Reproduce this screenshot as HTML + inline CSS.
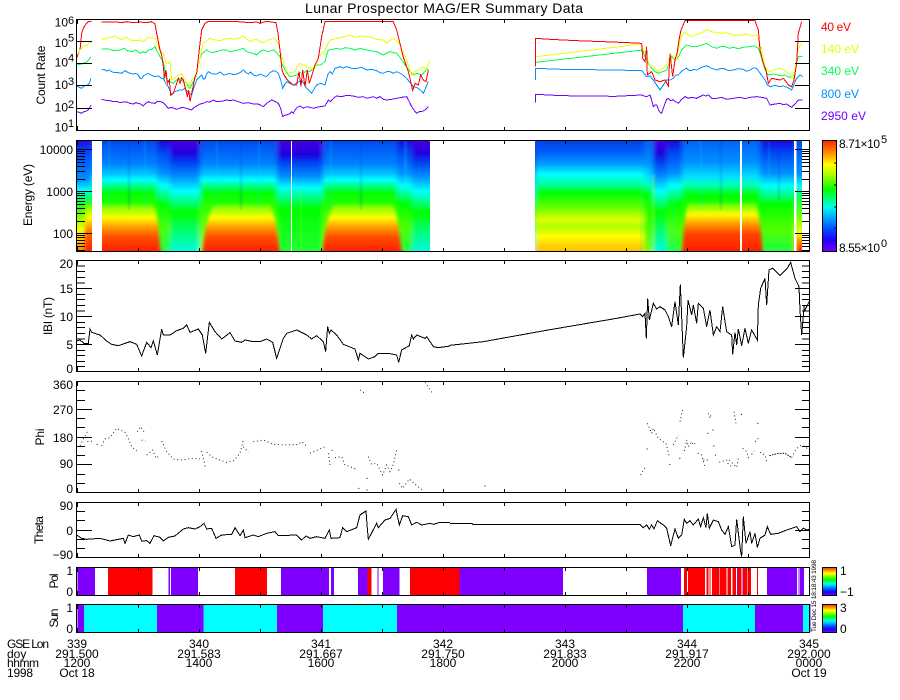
<!DOCTYPE html>
<html><head><meta charset="utf-8"><title>Lunar Prospector MAG/ER Summary Data</title>
<style>
html,body{margin:0;padding:0;background:#fff}
svg{display:block}
text{font-family:"Liberation Sans",sans-serif;font-size:12px;fill:#000}
.c{text-anchor:middle}.e{text-anchor:end}
.cv polyline{fill:none;stroke-width:3;shape-rendering:crispEdges}
.dot polyline{fill:none;stroke:#000;stroke-width:2.6;stroke-dasharray:3 8}
.dot path{fill:none;stroke:#000;stroke-width:3}
.ax{fill:none;stroke:#000;stroke-width:1;shape-rendering:crispEdges}
.bars rect{shape-rendering:crispEdges}
</style></head><body>
<svg width="900" height="700" viewBox="0 0 900 700" xmlns="http://www.w3.org/2000/svg">
<defs>
<linearGradient id="day" gradientUnits="userSpaceOnUse" x1="0" y1="140" x2="0" y2="251">
<stop offset="0" stop-color="#0048f0"/><stop offset=".21" stop-color="#0080ff"/><stop offset=".3" stop-color="#00c0ff"/><stop offset=".36" stop-color="#00ffff"/><stop offset=".41" stop-color="#00ff90"/><stop offset=".48" stop-color="#00ff00"/><stop offset=".6" stop-color="#80ff00"/><stop offset=".7" stop-color="#ffff00"/><stop offset=".78" stop-color="#ffa000"/><stop offset=".87" stop-color="#ff5000"/><stop offset="1" stop-color="#ff2000"/></linearGradient>
<linearGradient id="dayb" gradientUnits="userSpaceOnUse" x1="0" y1="140" x2="0" y2="251">
<stop offset="0" stop-color="#0048f0"/><stop offset=".21" stop-color="#0080ff"/><stop offset=".3" stop-color="#00c0ff"/><stop offset=".36" stop-color="#00ffff"/><stop offset=".41" stop-color="#00ff90"/><stop offset=".48" stop-color="#00ff00"/><stop offset=".7" stop-color="#50ff00"/><stop offset="1" stop-color="#a0ff00"/></linearGradient>
<linearGradient id="wake" gradientUnits="userSpaceOnUse" x1="0" y1="140" x2="0" y2="251">
<stop offset="0" stop-color="#4800e0"/><stop offset=".12" stop-color="#2000e0"/><stop offset=".2" stop-color="#0040f0"/><stop offset=".33" stop-color="#0090ff"/><stop offset=".46" stop-color="#00ffff"/><stop offset=".55" stop-color="#00ff90"/><stop offset=".65" stop-color="#00ff00"/><stop offset=".82" stop-color="#00ff70"/><stop offset="1" stop-color="#00f8e0"/></linearGradient>
<linearGradient id="wake2" gradientUnits="userSpaceOnUse" x1="0" y1="140" x2="0" y2="251">
<stop offset="0" stop-color="#4800e0"/><stop offset=".13" stop-color="#2000e0"/><stop offset=".2" stop-color="#0040f0"/><stop offset=".33" stop-color="#0090ff"/><stop offset=".43" stop-color="#00ffff"/><stop offset=".52" stop-color="#00ff80"/><stop offset=".62" stop-color="#00ff00"/><stop offset="1" stop-color="#20ff30"/></linearGradient>
<linearGradient id="dusk" gradientUnits="userSpaceOnUse" x1="0" y1="140" x2="0" y2="251">
<stop offset="0" stop-color="#2000e0"/><stop offset=".1" stop-color="#0040f0"/><stop offset=".3" stop-color="#0090ff"/><stop offset=".41" stop-color="#00ffff"/><stop offset=".5" stop-color="#00ff80"/><stop offset=".58" stop-color="#00ff00"/><stop offset=".8" stop-color="#50ff00"/><stop offset="1" stop-color="#20ff40"/></linearGradient>
<linearGradient id="gap" gradientUnits="userSpaceOnUse" x1="0" y1="140" x2="0" y2="251">
<stop offset="0" stop-color="#0040e0"/><stop offset=".1" stop-color="#0058f8"/><stop offset=".22" stop-color="#00a0ff"/><stop offset=".31" stop-color="#00ffff"/><stop offset=".4" stop-color="#00ffa0"/><stop offset=".48" stop-color="#00ff00"/><stop offset=".6" stop-color="#60ff00"/><stop offset=".69" stop-color="#c0ff00"/><stop offset=".72" stop-color="#e0ff00"/><stop offset=".78" stop-color="#b0ff00"/><stop offset=".87" stop-color="#ffff00"/><stop offset=".95" stop-color="#ffd000"/><stop offset="1" stop-color="#ffc000"/></linearGradient>
<linearGradient id="day2" gradientUnits="userSpaceOnUse" x1="0" y1="140" x2="0" y2="251">
<stop offset="0" stop-color="#0060f8"/><stop offset=".2" stop-color="#0090ff"/><stop offset=".33" stop-color="#00e0ff"/><stop offset=".4" stop-color="#00ffc0"/><stop offset=".5" stop-color="#00ff00"/><stop offset=".62" stop-color="#a0ff00"/><stop offset=".67" stop-color="#ffff00"/><stop offset=".75" stop-color="#ffa000"/><stop offset=".85" stop-color="#ff4000"/><stop offset="1" stop-color="#ff2000"/></linearGradient>
<linearGradient id="day2b" gradientUnits="userSpaceOnUse" x1="0" y1="140" x2="0" y2="251">
<stop offset="0" stop-color="#0060f8"/><stop offset=".2" stop-color="#0090ff"/><stop offset=".33" stop-color="#00e0ff"/><stop offset=".4" stop-color="#00ffc0"/><stop offset=".5" stop-color="#00ff00"/><stop offset="1" stop-color="#70ff00"/></linearGradient>
<linearGradient id="stripL" gradientUnits="userSpaceOnUse" x1="0" y1="140" x2="0" y2="251">
<stop offset="0" stop-color="#3000e0"/><stop offset=".09" stop-color="#0040ff"/><stop offset=".36" stop-color="#0090ff"/><stop offset=".45" stop-color="#00ffff"/><stop offset=".51" stop-color="#00ff80"/><stop offset=".63" stop-color="#40ff00"/><stop offset=".81" stop-color="#ffff00"/><stop offset="1" stop-color="#ff8000"/></linearGradient>
<linearGradient id="stripR" gradientUnits="userSpaceOnUse" x1="0" y1="140" x2="0" y2="251">
<stop offset="0" stop-color="#0050f0"/><stop offset=".3" stop-color="#0090ff"/><stop offset=".42" stop-color="#00ffff"/><stop offset=".5" stop-color="#00ff60"/><stop offset=".7" stop-color="#80ff00"/><stop offset=".84" stop-color="#ffff00"/><stop offset=".92" stop-color="#ff8000"/><stop offset="1" stop-color="#ff2000"/></linearGradient>
<linearGradient id="cb" x1="0" y1="1" x2="0" y2="0">
<stop offset="0" stop-color="#7000ff"/><stop offset=".1" stop-color="#2000ff"/><stop offset=".2" stop-color="#0050ff"/><stop offset=".33" stop-color="#00c0ff"/><stop offset=".4" stop-color="#00ffe0"/><stop offset=".55" stop-color="#00ff00"/><stop offset=".72" stop-color="#d0ff00"/><stop offset=".78" stop-color="#ffff00"/><stop offset=".88" stop-color="#ff9000"/><stop offset="1" stop-color="#ff2000"/></linearGradient>
<filter id="bl" x="-5%" y="-5%" width="110%" height="110%"><feGaussianBlur stdDeviation="2.4 0"/></filter>
<filter id="bh" x="-10%" y="-10%" width="120%" height="120%"><feGaussianBlur stdDeviation="1.5 1.6"/></filter>
<filter id="bs" x="-10%" y="-10%" width="120%" height="120%"><feGaussianBlur stdDeviation="0.7 0"/></filter>
<clipPath id="p2"><rect x="77" y="140" width="733" height="111"/></clipPath>
<path id="xt" d="M77.5 0v4M138.5 0v3M199.5 0v3M260.5 0v3M321.5 0v3M382.5 0v3M443.5 0v3M504.5 0v3M565.5 0v3M626.5 0v3M687.5 0v3M748.5 0v3M809.5 0v4"/>
</defs>
<rect width="900" height="700" fill="#fff"/>

<text x="444" y="13" class="c" style="font-size:14px" textLength="278">Lunar Prospector MAG/ER Summary Data</text>

<!-- Spectrogram -->
<g clip-path="url(#p2)">
<g filter="url(#bl)">
<rect x="60" y="130" width="32" height="130" fill="url(#stripL)"/>
<rect x="92" y="130" width="65" height="130" fill="url(#dayb)"/>
<rect x="157" y="130" width="13" height="130" fill="url(#dusk)"/>
<rect x="170" y="130" width="30" height="130" fill="url(#wake)"/>
<rect x="200" y="130" width="77" height="130" fill="url(#dayb)"/>
<rect x="277" y="130" width="46" height="130" fill="url(#wake2)"/>
<rect x="323" y="130" width="74" height="130" fill="url(#dayb)"/>
<rect x="397" y="130" width="15" height="130" fill="url(#dusk)"/>
<rect x="412" y="130" width="123" height="130" fill="url(#wake)"/>
<rect x="535" y="130" width="109" height="130" fill="url(#gap)"/>
<rect x="644" y="130" width="9" height="130" fill="url(#day2b)"/>
<rect x="653" y="130" width="14" height="130" fill="url(#wake)"/>
<rect x="667" y="130" width="15" height="130" fill="url(#dusk)"/>
<rect x="682" y="130" width="78" height="130" fill="url(#day2b)"/>
<rect x="760" y="130" width="35" height="130" fill="url(#dusk)"/>
<rect x="795" y="130" width="30" height="130" fill="url(#stripR)"/>
</g>
<g filter="url(#bh)">
<path d="M85 205H152Q156 207 158 225L161 256H85Z" fill="url(#day)"/>
<path d="M202 256Q206 216 214 205H270Q276 216 280 256Z" fill="url(#day)"/>
<path d="M322 256Q326 216 334 205H393Q398 216 402 256Z" fill="url(#day)"/>
<path d="M682 256Q684 216 688 203H756Q760 216 763 256Z" fill="url(#day2)"/>
</g>
<g filter="url(#bs)" fill-opacity=".18">
<rect x="108" y="140" width="2" height="70" fill="#00e0ff"/><rect x="128" y="140" width="2" height="70" fill="#0020d0"/><rect x="144" y="140" width="2" height="70" fill="#00e0ff"/>
<rect x="216" y="140" width="2" height="70" fill="#00e0ff"/><rect x="240" y="140" width="2" height="70" fill="#0020d0"/><rect x="258" y="140" width="2" height="70" fill="#00e0ff"/>
<rect x="330" y="140" width="2" height="70" fill="#00e0ff"/><rect x="360" y="140" width="2" height="70" fill="#0020d0"/><rect x="404" y="140" width="3" height="50" fill="#00ffff"/>
<rect x="700" y="140" width="2" height="70" fill="#00e0ff"/><rect x="720" y="140" width="2" height="70" fill="#0020d0"/><rect x="768" y="140" width="2" height="60" fill="#00e0ff"/><rect x="778" y="140" width="2" height="60" fill="#0020d0"/>
<rect x="652" y="175" width="3" height="76" fill="#ffff00"/><rect x="640" y="175" width="2" height="76" fill="#00ffc0"/><rect x="672" y="195" width="3" height="56" fill="#00ffc0"/>
<rect x="163" y="190" width="2" height="61" fill="#00ffc0"/><rect x="300" y="190" width="2" height="61" fill="#90ff00"/>
</g>
<g class="bars" fill="#fff">
<rect x="92" y="140" width="10" height="111"/>
<rect x="291" y="140" width="1" height="111"/>
<rect x="430" y="140" width="105" height="111"/>
<rect x="740" y="140" width="2" height="111"/>
<rect x="794" y="140" width="2.5" height="111"/>
<rect x="802" y="140" width="8" height="111"/>
</g>
</g>

<!-- Count rates, left -->
<g class="cv" transform="scale(.33333)">
<polyline stroke="#ff0000" points="230,175 235,160 240,150 245,100 250,85 258,72 265,65 275,65"/>
<polyline stroke="#e8ff00" points="230,165 240,150 250,140 262,135 275,125"/>
<polyline stroke="#00ff50" points="230,195 245,192 262,185 273,170"/>
<polyline stroke="#0090ff" points="230,258 238,262 245,265 252,258 262,255 268,250 273,235"/>
<polyline stroke="#7000ff" points="230,335 238,337 245,340 252,335 262,332 268,325 273,315"/>
<polyline stroke="#7000ff" points="305,298 314,300 320,302 330,302 340,305 350,304 360,308 370,306 380,306 390,310 400,312 408,308 415,310 422,312 430,318 437,310 445,305 455,309 465,310 472,304 480,304 490,308 497,316 505,325 515,322 530,328 540,324 550,322 562,326 575,330 583,322 590,318 600,312 610,310 620,305 630,306 640,300 650,305 670,303 680,300 690,302 700,300 715,305 730,310 745,308 760,312 775,312 790,320 800,310 815,300 825,304 835,310 842,325 848,350 855,345 860,345 868,342 875,335 880,340 885,330 892,322 900,318 910,325 920,320 930,322 940,325 950,322 960,320 975,318 985,300 992,305 1000,295 1010,288 1025,290 1040,286 1060,288 1075,292 1090,290 1100,295 1120,290 1130,295 1140,290 1150,298 1160,300 1175,298 1190,295 1205,292 1220,290 1228,305 1235,320 1243,332 1250,340 1258,335 1265,335 1275,330 1285,320"/>
<polyline stroke="#0090ff" points="305,210 312,208 320,213 328,210 335,215 345,218 355,218 365,220 375,212 385,218 400,222 408,220 415,225 420,235 425,235 430,228 435,225 445,220 455,226 465,230 475,228 485,235 490,235 497,250 505,260 515,285 520,278 525,275 533,272 540,270 548,270 555,265 565,278 575,285 582,262 590,240 597,232 605,225 610,238 615,235 620,222 625,215 637,222 650,222 660,216 672,225 690,220 700,224 710,222 720,218 730,210 738,218 745,222 752,216 760,225 770,228 780,222 790,226 800,230 810,218 820,212 828,214 835,220 842,240 848,265 853,255 860,245 870,250 880,255 892,248 905,240 912,252 920,265 928,272 935,280 942,268 950,255 962,250 975,255 983,225 990,215 997,222 1005,205 1020,200 1030,204 1040,200 1055,205 1070,205 1085,202 1100,210 1115,208 1130,212 1140,218 1150,220 1160,215 1170,215 1180,220 1190,215 1205,222 1220,235 1230,248 1240,260 1248,262 1255,265 1263,272 1270,280 1278,262 1285,245"/>
<polyline stroke="#00ff50" points="305,148 318,146 330,148 340,152 350,152 360,150 372,145 382,152 395,155 407,150 420,160 430,155 437,158 445,150 455,148 465,140 472,155 480,170 485,178 490,185 495,215 500,240 510,245 520,250 530,240 540,235 550,245 560,250 570,265 580,245 590,225 600,175 607,160 620,150 635,158 650,155 665,150 680,150 690,156 700,153 715,150 730,145 740,155 750,158 760,160 770,165 780,155 790,150 805,155 820,150 830,158 840,170 845,190 850,200 860,218 870,230 880,228 890,225 900,218 910,220 920,212 930,215 940,205 950,195 962,195 975,185 980,165 985,150 997,148 1010,145 1022,148 1035,143 1050,145 1065,150 1080,145 1100,150 1115,153 1130,155 1140,160 1150,165 1160,160 1170,155 1180,158 1190,160 1202,175 1215,195 1228,212 1240,225 1252,220 1265,225 1275,215 1285,205"/>
<polyline stroke="#e8ff00" points="305,115 312,118 320,115 332,112 345,108 355,115 365,120 375,112 385,115 397,122 410,122 420,120 430,125 437,118 445,112 455,114 465,115 472,130 478,150 485,155 490,160 495,180 500,190 505,190 510,185 513,220 515,240 522,235 530,230 537,225 545,220 550,232 555,240 560,255 565,265 570,255 575,240 582,235 590,225 595,200 600,175 605,150 610,130 620,122 630,115 645,120 660,122 672,118 685,115 700,117 715,115 730,108 740,118 750,125 760,120 770,118 780,125 790,128 805,120 820,115 828,120 835,130 842,158 848,180 854,200 860,215 872,218 885,215 892,200 900,190 908,195 915,195 922,205 930,200 937,208 945,205 950,188 955,170 965,162 975,150 982,135 990,120 1000,118 1010,115 1025,112 1035,110 1050,105 1065,112 1085,108 1100,110 1115,112 1130,118 1150,120 1160,130 1170,122 1180,115 1190,122 1200,135 1210,158 1220,180 1228,205 1235,225 1245,215 1255,210 1263,205 1270,200 1278,210 1284,195 1290,180"/>
<polyline stroke="#ff0000" points="305,66 370,67 380,65 400,68 420,66 440,68 455,65 465,72 470,100 480,150 485,165 490,200 493,235 498,210 502,250 508,240 512,285 520,280 530,250 535,235 540,250 545,233 550,240 555,260 562,290 566,270 570,305 575,280 585,230 590,220 600,130 605,90 615,70 625,64 700,64 750,68 770,66 780,70 800,64 828,68 834,100 842,170 846,210 852,225 862,240 880,255 890,255 897,215 903,260 908,210 915,260 922,210 928,250 936,225 945,195 955,175 965,110 975,65 1180,65 1190,90 1200,130 1208,165 1218,195 1225,215 1230,235 1238,272 1245,250 1255,255 1262,225 1270,240 1278,245 1285,210"/>
</g>
<!-- Count rates, right -->
<g class="cv" transform="translate(450,0) scale(.33333)">
<polyline stroke="#7000ff" points="257,308 257,283 335,287 495,289 575,285 582,288 590,290 600,285 605,300 610,320 615,315 620,315 628,335 635,340 640,325 645,310 650,298 655,295 662,302 670,300 677,305 685,310 695,298 705,290 715,295 725,292 740,295 750,290 760,285 767,288 775,285 785,295 800,295 815,292 830,298 850,295 870,292 885,296 900,292 920,290 935,292 950,295 955,305 960,315 975,312 990,310 1000,314 1010,312 1018,318 1025,322 1035,312 1045,300 1058,300"/>
<polyline stroke="#0090ff" points="257,240 257,205 335,208 495,210 575,212 582,220 590,230 600,228 610,240 620,255 630,270 640,255 650,240 660,240 670,235 678,225 685,225 697,212 710,205 717,212 725,212 732,208 740,210 755,202 770,197 785,205 800,210 810,206 820,205 835,212 850,210 865,206 880,208 890,214 900,210 910,204 920,205 932,222 945,240 952,255 960,260 975,256 988,260 1000,258 1012,262 1025,270 1033,250 1040,235 1050,225 1058,230"/>
<polyline stroke="#00ff50" points="257,187 578,150 584,168 590,180 597,195 605,205 615,215 625,220 637,215 650,210 658,190 665,170 672,178 680,180 688,165 695,150 702,142 710,135 725,140 740,140 755,135 770,130 785,140 800,145 812,140 825,140 838,145 850,142 865,146 880,142 900,140 912,138 925,145 935,175 945,210 950,220 955,225 970,222 985,225 995,228 1005,225 1018,232 1030,230 1038,195 1045,170 1058,170"/>
<polyline stroke="#e8ff00" points="257,170 575,132 580,150 590,165 595,185 600,200 608,198 615,205 620,212 625,215 632,210 640,205 645,198 650,195 658,178 665,165 672,175 680,180 685,150 690,120 697,105 705,95 715,105 725,110 737,104 750,100 760,96 770,88 785,95 800,98 815,100 830,98 850,105 870,106 890,102 905,108 920,105 928,125 935,150 940,175 945,200 952,210 960,215 975,208 990,205 998,208 1005,210 1018,222 1030,235 1038,190 1045,145 1055,130"/>
<polyline stroke="#ff0000" points="257,200 257,115 300,118 380,122 460,125 535,128 575,130 578,175 585,185 590,140 592,225 605,215 615,240 630,245 645,240 655,258 660,160 668,230 675,180 682,155 687,120 693,90 705,62 915,62 925,90 930,150 940,190 948,210 955,250 965,235 990,240 1000,235 1015,255 1025,260 1032,240 1040,190 1045,100 1055,65"/>
</g>

<!-- |B| -->
<g class="cv" transform="translate(0,255) scale(.33333)">
<polyline stroke="#000" points="230,258 240,255 252,265 265,265 270,222 275,232 300,240 320,258 335,268 355,272 375,265 390,260 410,268 425,303 440,262 453,278 460,257 472,300 485,222 490,240 510,240 530,227 550,220 560,210 570,232 595,222 607,240 617,295 628,202 645,230 665,252 690,233 705,258 725,262 735,255 760,260 780,260 800,252 818,262 830,310 850,250 860,235 890,225 920,240 935,252 950,242 970,260 977,290 983,215 988,235 993,225 1010,240 1030,268 1065,282 1075,315 1080,295 1105,312 1125,305 1135,295 1165,295 1190,300 1196,322 1205,285 1228,272 1235,240 1240,252 1250,240 1275,250 1280,245 1300,275 1315,278 1350,273"/>
</g>
<g class="cv" transform="translate(450,255) scale(.33333)">
<polyline stroke="#000" points="0,271 100,260 200,242 300,224 400,207 500,190 570,177 578,185 585,175 589,250 593,130 598,195 610,145 620,162 630,155 645,165 655,185 665,215 675,140 685,210 691,88 700,308 710,215 714,135 725,180 730,150 740,205 745,145 760,160 770,215 780,165 790,240 800,215 810,230 818,155 830,230 845,240 848,298 855,232 860,270 865,222 875,272 885,220 895,265 905,225 922,255 925,150 932,100 945,70 950,150 957,45 968,40 990,62 1012,40 1022,22 1035,70 1047,95 1050,165 1055,240 1063,150 1062,170 1075,145 1080,135"/>
</g>

<!-- Phi -->
<g class="dot" transform="translate(0,375) scale(.33333)">
<polyline points="240,212 262,170"/><polyline points="262,200 280,198"/><polyline points="305,212 315,192 330,188 350,160 375,172 385,190 395,215 410,228"/><polyline points="412,170 422,155 432,170"/><polyline points="425,195 437,198"/><polyline points="440,240 458,225 468,250 480,240"/><polyline points="485,198 500,230 520,252 545,255 575,250 600,252"/><polyline points="605,228 616,278"/><polyline points="620,232 640,248 680,262 700,258 720,235 730,195"/><polyline points="730,215 745,232"/><polyline points="760,200 790,195 820,208 860,210 895,208 905,200 918,212"/><polyline points="930,235 975,215"/><polyline points="985,235 990,270"/><polyline points="995,225 1005,230"/><polyline points="1005,248 1025,245 1035,270 1050,275 1072,284"/><polyline points="1105,245 1115,268 1130,265 1148,300 1160,270 1170,290 1180,268 1190,225"/><polyline points="1198,325 1208,340 1228,312 1250,332 1268,345"/><polyline points="1080,45 1095,55"/><polyline points="1275,22 1295,52"/>
<path d="M1075 340h3M1100 310h3M1100 345h3M1195 285h3M290 208h3"/>
</g>
<g class="dot" transform="translate(450,375) scale(.33333)">
<polyline points="572,300 588,272"/><polyline points="592,145 605,175 610,160 625,190 640,200 648,205 658,245"/><polyline points="670,210 685,180"/><polyline points="690,140 698,105"/><polyline points="703,228 710,195 715,215 725,200 730,210 740,200"/><polyline points="743,235 755,240 765,275"/><polyline points="775,115 780,130 785,115"/><polyline points="795,240 805,243"/><polyline points="808,262 830,255 835,268 847,277"/><polyline points="838,255 860,277 865,250"/><polyline points="852,110 858,145"/><polyline points="878,220 890,230 898,255"/><polyline points="905,238 912,228"/><polyline points="915,200 925,190"/><polyline points="930,232 945,240 952,265"/>
<polyline style="stroke-dasharray:5 3" points="958,242 985,235 1005,235 1025,248"/><polyline points="1025,248 1040,220 1055,210 1080,225"/>
<path d="M590 222h3M658 268h3M688 250h3M760 255h3M770 255h3M772 175h3M787 165h3M790 213h3M873 118h3M922 145h3M103 333h3"/>
</g>

<!-- Theta -->
<g class="cv" transform="translate(0,375) scale(.33333)">
<polyline stroke="#000" points="230,480 245,490 260,493 300,490 330,498 370,490 375,505 385,480 400,485 418,480 425,498 440,497 450,505 462,482 480,487 490,498 505,487 525,483 550,462 565,458 585,462 600,455 612,445 620,462 635,460 648,490 665,480 695,478 705,458 720,482 730,465 735,488 760,480 775,485 800,475 825,470 835,482 890,480 905,495 918,483 930,490 950,485 975,490 988,465 993,490 1020,488 1028,458 1040,470 1070,458 1080,420 1098,408 1102,460 1105,493 1130,445 1135,458 1155,435 1170,430 1188,403 1198,450 1208,422 1225,425 1235,450 1250,442 1265,450 1290,445 1300,448 1320,442 1350,442"/>
</g>
<g class="cv" transform="translate(450,375) scale(.33333)">
<polyline stroke="#000" points="0,445 65,445 68,448 570,448 580,458 590,450 598,462 605,450 612,462 622,437 640,450 650,460 662,512 675,462 685,490 695,480 703,433 710,445 720,437 730,450 745,432 752,455 760,428 768,458 772,415 778,460 790,435 805,440 815,465 825,478 835,455 845,515 855,510 860,433 872,530 875,545 880,425 888,505 900,470 905,505 915,475 922,517 930,490 945,480 952,455 962,478 985,475 1010,465 1040,455 1050,470 1060,460 1070,465 1080,462"/>
</g>

<!-- Pol bar -->
<g class="bars" transform="translate(0,567) scale(.33333,1)">
<g fill="#7f00ff"><rect x="232" width="53" height="28"/><rect x="505" width="5" height="28"/><rect x="513" width="76" height="28"/><rect x="590" width="4" height="28"/><rect x="843" width="144" height="28"/><rect x="993" width="9" height="28"/><rect x="1074" width="29" height="28"/><rect x="1132" width="3" height="28"/><rect x="1149" width="50" height="28"/></g>
<g fill="#ff0000"><rect x="324" width="134" height="28"/><rect x="705" width="96" height="28"/><rect x="1103" width="11" height="28"/><rect x="1230" width="120" height="28"/></g>
</g>
<g class="bars" transform="translate(450,567) scale(.33333,1)">
<rect x="0" width="29" height="28" fill="#ff0000"/>
<g fill="#7f00ff"><rect x="29" width="310" height="28"/><rect x="591" width="102" height="28"/><rect x="951" width="90" height="28"/><rect x="1045" width="3" height="28"/><rect x="1050" width="12" height="28"/></g>
<rect x="702" width="201" height="28" fill="#ff0000"/><rect x="921" width="3" height="28" fill="#ff0000"/>
<g fill="#fff"><rect x="711" width="3" height="28"/><rect x="765" width="4" height="28"/><rect x="775" width="3" height="28"/><rect x="782" width="4" height="28"/><rect x="808" width="2" height="28"/><rect x="829" width="4" height="28"/><rect x="843" width="4" height="28"/><rect x="858" width="3" height="28"/><rect x="875" width="3" height="28"/><rect x="892" width="2" height="28"/></g>
<g fill="#7f00ff"><rect x="862" width="2" height="28"/><rect x="880" width="2" height="28"/></g>
</g>
<!-- Sun bar -->
<g class="bars" transform="translate(0,604) scale(.33333,1)">
<rect x="232" width="2200" height="28" fill="#7f00ff"/>
<g fill="#00ffff"><rect x="252" width="219" height="28"/><rect x="611" width="220" height="28"/><rect x="969" width="222" height="28"/><rect x="2049" width="216" height="28"/><rect x="2409" width="21" height="28"/></g>
</g>

<!-- Colour bars -->
<rect x="823" y="140" width="14" height="111" fill="url(#cb)"/>
<rect x="823" y="567" width="14" height="28" fill="url(#cb)"/>
<rect x="823" y="604" width="14" height="28" fill="url(#cb)"/>
<g class="ax">
<rect x="822.5" y="140.5" width="14" height="111"/><rect x="822.5" y="567.5" width="14" height="28"/><rect x="822.5" y="604.5" width="14" height="28"/>
<path d="M836 163h-2M836 185h-2M836 207h-2M836 228h-2"/>
</g>

<!-- Frames and ticks -->
<g class="ax">
<rect x="76.5" y="19.5" width="733" height="111"/>
<rect x="76.5" y="140.5" width="733" height="111"/>
<rect x="76.5" y="260.5" width="733" height="111"/>
<rect x="76.5" y="381.5" width="733" height="111"/>
<rect x="76.5" y="502.5" width="733" height="55"/>
<rect x="76.5" y="567.5" width="733" height="28"/>
<rect x="76.5" y="604.5" width="733" height="28"/>
<use href="#xt" transform="translate(0,20)"/><use href="#xt" transform="translate(0,130) scale(1,-1)"/>
<use href="#xt" transform="translate(0,141)"/><use href="#xt" transform="translate(0,251) scale(1,-1)"/>
<use href="#xt" transform="translate(0,261)"/><use href="#xt" transform="translate(0,371) scale(1,-1)"/>
<use href="#xt" transform="translate(0,382)"/><use href="#xt" transform="translate(0,492) scale(1,-1)"/>
<use href="#xt" transform="translate(0,503)"/><use href="#xt" transform="translate(0,557) scale(1,-1)"/>
<use href="#xt" transform="translate(0,568)"/><use href="#xt" transform="translate(0,595) scale(1,-1)"/>
<use href="#xt" transform="translate(0,605)"/><use href="#xt" transform="translate(0,632) scale(1,-1)"/>
<g id="yl">
<path d="M77 41.5h15M77 63.5h15M77 85.5h15M77 108.5h15"/>
<path d="M77 149.5h15M77 191.5h15M77 233.5h15M77 151.5h8M77 153.5h8M77 156.5h8M77 159.5h8M77 162.5h8M77 166.5h8M77 171.5h8M77 179.5h8M77 193.5h8M77 195.5h8M77 198.5h8M77 201.5h8M77 204.5h8M77 208.5h8M77 213.5h8M77 221.5h8M77 235.5h8M77 237.5h8M77 240.5h8M77 243.5h8M77 246.5h8M77 250.5h8"/>
<path d="M77 288.5h15M77 316.5h15M77 344.5h15M77 266h8M77 271.5h8M77 277.5h8M77 283h8M77 294.5h8M77 299.5h8M77 305.5h8M77 311h8M77 322.5h8M77 327.5h8M77 333.5h8M77 339h8M77 350.5h8M77 355.5h8M77 361.5h8M77 366.5h8"/>
<path d="M77 409.5h15M77 437.5h15M77 464.5h15M77 390.5h8M77 400.5h8M77 418.5h8M77 427.5h8M77 446.5h8M77 455.5h8M77 474.5h8M77 483.5h8"/>
<path d="M77 530.5h15M77 511.5h8M77 520.5h8M77 539.5h8M77 548.5h8"/>
</g>
<use href="#yl" transform="translate(887,0) scale(-1,1)"/>
</g>

<!-- Y axis labels -->
<text x="68" y="26.5" class="e">10</text><text x="68" y="24" style="font-size:11px">6</text>
<text x="68" y="47" class="e">10</text><text x="68" y="41.5" style="font-size:11px">5</text>
<text x="68" y="66.5" class="e">10</text><text x="68" y="61.5" style="font-size:11px">4</text>
<text x="68" y="89" class="e">10</text><text x="68" y="85" style="font-size:11px">3</text>
<text x="68" y="111.5" class="e">10</text><text x="68" y="108" style="font-size:11px">2</text>
<text x="68" y="131.5" class="e">10</text><text x="68" y="127" style="font-size:11px">1</text>
<text transform="translate(45,75) rotate(-90)" class="c" textLength="59">Count Rate</text>
<text x="73" y="154" class="e">10000</text><text x="73" y="196" class="e">1000</text><text x="73" y="238" class="e">100</text>
<text transform="translate(32,195) rotate(-90)" class="c" textLength="62">Energy (eV)</text>
<text x="73" y="268" class="e">20</text><text x="73" y="293" class="e">15</text><text x="73" y="321" class="e">10</text><text x="73" y="349" class="e">5</text><text x="73" y="373" class="e">0</text>
<text transform="translate(52,316) rotate(-90)" class="c" textLength="38">IBI (nT)</text>
<text x="73" y="389" class="e">360</text><text x="73" y="414" class="e">270</text><text x="73" y="442" class="e">180</text><text x="73" y="468" class="e">90</text><text x="73" y="493" class="e">0</text>
<text transform="translate(44,437) rotate(-90)" class="c" textLength="17">Phi</text>
<text x="73" y="510" class="e">90</text><text x="73" y="535" class="e">0</text><text x="73" y="559" class="e">−90</text>
<text transform="translate(43,530) rotate(-90)" class="c" textLength="28">Theta</text>
<text x="73" y="575" class="e">1</text><text x="73" y="596" class="e">0</text>
<text transform="translate(58,581) rotate(-90)" class="c" textLength="15">Pol</text>
<text x="73" y="612" class="e">1</text><text x="73" y="633" class="e">0</text>
<text transform="translate(58,618) rotate(-90)" class="c" textLength="19">Sun</text>

<!-- Legend -->
<text x="821" y="31" style="fill:#ff0000" textLength="30">40 eV</text>
<text x="821" y="53" style="fill:#e8ff00" textLength="38">140 eV</text>
<text x="821" y="75" style="fill:#00ff50" textLength="38">340 eV</text>
<text x="821" y="98" style="fill:#0090ff" textLength="38">800 eV</text>
<text x="821" y="120" style="fill:#7000ff" textLength="45">2950 eV</text>

<!-- Colorbar labels -->
<text x="839" y="148" textLength="41">8.71×10</text><text x="881" y="143" style="font-size:11px">5</text>
<text x="839" y="252" textLength="41">8.55×10</text><text x="881" y="247" style="font-size:11px">0</text>
<text x="840" y="575">1</text><text x="840" y="596">−1</text>
<text x="840" y="612">3</text><text x="840" y="633">0</text>

<!-- Time-stamp -->
<text transform="translate(816,632) rotate(-90)" style="font-size:6.5px" textLength="72">Tue Dec 15 18:18:43 1998</text>

<!-- Bottom axis labels -->
<text x="7" y="648" textLength="42">GSE Lon</text><text x="7" y="658">doy</text><text x="7" y="667" textLength="32">hhmm</text><text x="7" y="677" textLength="26">1998</text>
<text x="77" y="648" class="c">339</text><text x="77" y="658" class="c">291.500</text><text x="77" y="667" class="c">1200</text><text x="77" y="677" class="c">Oct 18</text>
<text x="199" y="648" class="c">340</text><text x="199" y="658" class="c">291.583</text><text x="199" y="667" class="c">1400</text>
<text x="321" y="648" class="c">341</text><text x="321" y="658" class="c">291.667</text><text x="321" y="667" class="c">1600</text>
<text x="443" y="648" class="c">342</text><text x="443" y="658" class="c">291.750</text><text x="443" y="667" class="c">1800</text>
<text x="565" y="648" class="c">343</text><text x="565" y="658" class="c">291.833</text><text x="565" y="667" class="c">2000</text>
<text x="687" y="648" class="c">344</text><text x="687" y="658" class="c">291.917</text><text x="687" y="667" class="c">2200</text>
<text x="809" y="648" class="c">345</text><text x="809" y="658" class="c">292.000</text><text x="809" y="667" class="c">0000</text><text x="809" y="677" class="c">Oct 19</text>
</svg>
</body></html>
